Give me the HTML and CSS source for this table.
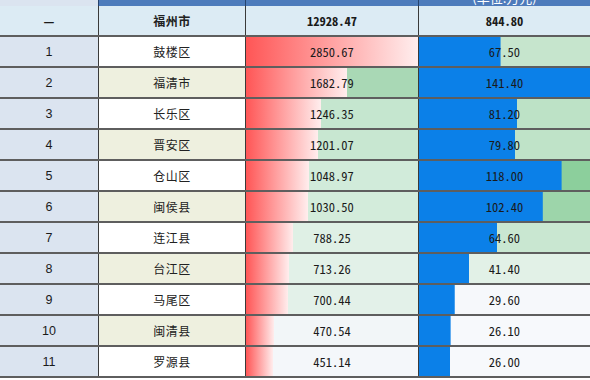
FILE: index.html
```html
<!DOCTYPE html>
<html lang="zh-CN">
<head>
<meta charset="utf-8">
<title>福州市各区县数据</title>
<link rel="stylesheet" href="styles.css">
</head>
<body>
<div class="sheet">
  <div class="row head">
    <div class="c c1"></div>
    <div class="c c2"></div>
    <div class="c c3"></div>
    <div class="c c4"><span class="unit">(单位:万元)</span></div>
  </div>
  <div class="row total">
    <div class="c c1"><span class="dash">—</span></div>
    <div class="c c2 name">福州市</div>
    <div class="c c3 num">12928.47</div>
    <div class="c c4 num">844.80</div>
  </div>
  <div class="row odd">
    <div class="c c1 rank">1</div>
    <div class="c c2 name">鼓楼区</div>
    <div class="c c3 num" style="--w:100%;--bg:#ffffff">2850.67</div>
    <div class="c c4 num" style="--w:47.7%;--bg:#c6e5cd">67.50</div>
  </div>
  <div class="row even">
    <div class="c c1 rank">2</div>
    <div class="c c2 name">福清市</div>
    <div class="c c3 num" style="--w:59%;--bg:#a9d8b5">1682.79</div>
    <div class="c c4 num" style="--w:100%;--bg:#8ccf9c">141.40</div>
  </div>
  <div class="row odd">
    <div class="c c1 rank">3</div>
    <div class="c c2 name">长乐区</div>
    <div class="c c3 num" style="--w:43.7%;--bg:#c5e6cf">1246.35</div>
    <div class="c c4 num" style="--w:57.4%;--bg:#bde2c6">81.20</div>
  </div>
  <div class="row even">
    <div class="c c1 rank">4</div>
    <div class="c c2 name">晋安区</div>
    <div class="c c3 num" style="--w:42.1%;--bg:#c8e7d1">1201.07</div>
    <div class="c c4 num" style="--w:56.4%;--bg:#bfe3c8">79.80</div>
  </div>
  <div class="row odd">
    <div class="c c1 rank">5</div>
    <div class="c c2 name">仓山区</div>
    <div class="c c3 num" style="--w:36.8%;--bg:#d1ebda">1048.97</div>
    <div class="c c4 num" style="--w:83.4%;--bg:#8ccf9c">118.00</div>
  </div>
  <div class="row even">
    <div class="c c1 rank">6</div>
    <div class="c c2 name">闽侯县</div>
    <div class="c c3 num" style="--w:36.1%;--bg:#d3ecdb">1030.50</div>
    <div class="c c4 num" style="--w:72.4%;--bg:#9dd5aa">102.40</div>
  </div>
  <div class="row odd">
    <div class="c c1 rank">7</div>
    <div class="c c2 name">连江县</div>
    <div class="c c3 num" style="--w:27.6%;--bg:#dff0e5">788.25</div>
    <div class="c c4 num" style="--w:45.7%;--bg:#c9e7d1">64.60</div>
  </div>
  <div class="row even">
    <div class="c c1 rank">8</div>
    <div class="c c2 name">台江区</div>
    <div class="c c3 num" style="--w:25%;--bg:#e2f1e8">713.26</div>
    <div class="c c4 num" style="--w:29.3%;--bg:#e2f1e7">41.40</div>
  </div>
  <div class="row odd">
    <div class="c c1 rank">9</div>
    <div class="c c2 name">马尾区</div>
    <div class="c c3 num" style="--w:24.6%;--bg:#e3f1e9">700.44</div>
    <div class="c c4 num" style="--w:20.9%;--bg:#f6f8fb">29.60</div>
  </div>
  <div class="row even">
    <div class="c c1 rank">10</div>
    <div class="c c2 name">闽清县</div>
    <div class="c c3 num" style="--w:16.5%;--bg:#f2f6f8">470.54</div>
    <div class="c c4 num" style="--w:18.5%;--bg:#f7f9fc">26.10</div>
  </div>
  <div class="row odd">
    <div class="c c1 rank">11</div>
    <div class="c c2 name">罗源县</div>
    <div class="c c3 num" style="--w:15.8%;--bg:#f4f7fa">451.14</div>
    <div class="c c4 num" style="--w:18.4%;--bg:#f7f9fc">26.00</div>
  </div>
</div>
</body>
</html>
```
FILE: styles.css
```css
html, body {
  margin: 0;
  padding: 0;
  background: #ffffff;
}

.sheet {
  width: 590px;
  font-family: "Noto Sans CJK SC", "Noto Sans", sans-serif;
  color: #1a1a1a;
}

.row {
  display: grid;
  grid-template-columns: 99px 147px 173px 171px;
  grid-template-rows: 29px;
  height: 31px;
  box-sizing: border-box;
  border-bottom: 2px solid #5e5e5e;
}

.c {
  display: flex;
  align-items: center;
  justify-content: center;
  box-sizing: border-box;
  border-right: 1px solid #3a3a3a;
  white-space: nowrap;
  min-width: 0;
}

.c4 {
  border-right: none;
}

/* top header strip (cut off by the top edge) */
.head {
  height: 6px;
  grid-template-rows: 6px;
  border-bottom: none;
  background: #4d7bbb;
  overflow: hidden;
}

.head .c {
  align-items: flex-end;
  border-right-color: #25436e;
}

.unit {
  color: #ffffff;
  font-size: 13px;
  line-height: 14px;
  margin-bottom: 1px;
}

/* column fills */
.c1 {
  background: #dbe4f0;
}

.odd .c2 {
  background: #ffffff;
}

.even .c2 {
  background: #eef0df;
}

.total .c {
  background: #dcebf4;
  font-weight: 700;
}

.rank {
  font-family: "Liberation Sans", Arial, sans-serif;
  font-size: 12.5px;
}

.dash {
  font-size: 12px;
}

.name {
  font-size: 12px;
  letter-spacing: 0.5px;
  color: #222222;
}

.num {
  font-size: 12.5px;
  font-feature-settings: "hwid" 1;
}

/* data bar + colour scale */
.row .c3.num[style] {
  background:
    linear-gradient(to right, #ff5656 0%, #ff9b9b 45%, #ffeeee 100%) left top / var(--w) 100% no-repeat,
    var(--bg);
}

.row .c4.num[style] {
  background:
    linear-gradient(#0b80e8, #0b80e8) left top / var(--w) 100% no-repeat,
    var(--bg);
}
```
